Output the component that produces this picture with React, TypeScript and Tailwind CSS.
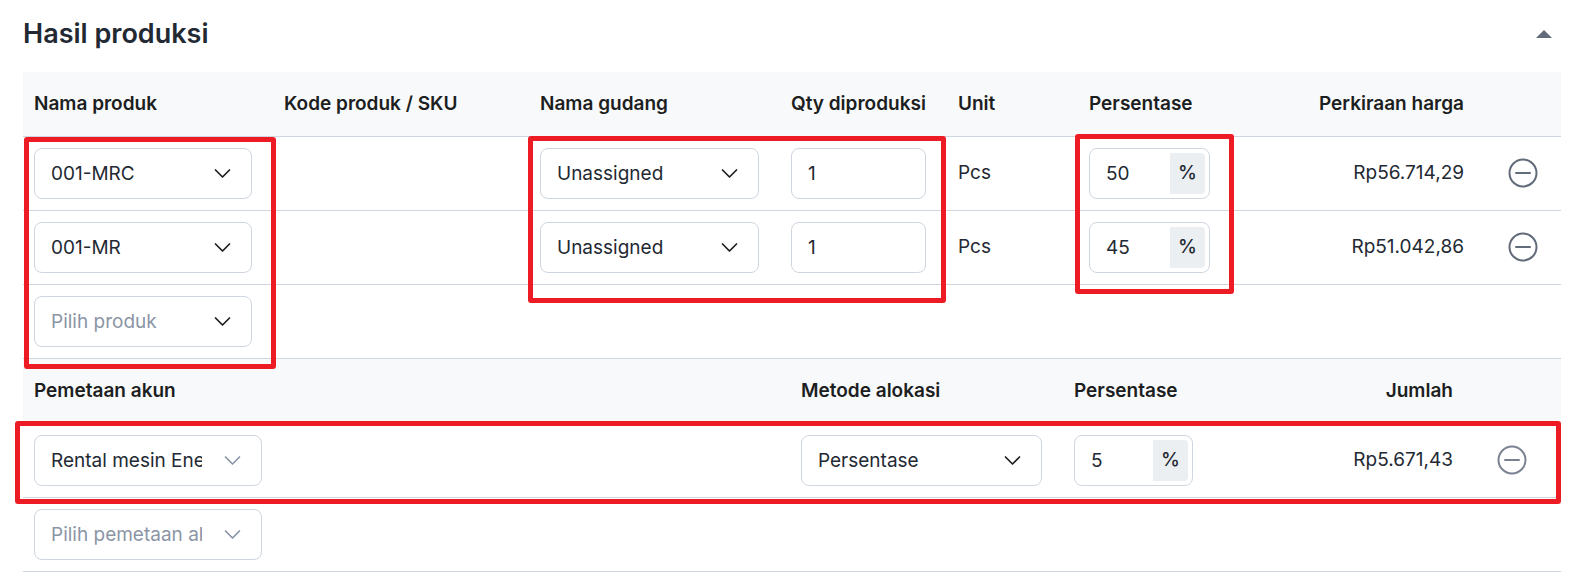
import React, { useState } from 'react';

interface Product {
  id: number;
  name: string;
  warehouse: string;
  qty: string;
  unit: string;
  percent: string;
  price: string;
}

const products: Product[] = [
  { id: 1, name: '001-MRC', warehouse: 'Unassigned', qty: '1', unit: 'Pcs', percent: '50', price: 'Rp56.714,29' },
  { id: 2, name: '001-MR', warehouse: 'Unassigned', qty: '1', unit: 'Pcs', percent: '45', price: 'Rp51.042,86' },
];

const fieldClass = 'h-[51px] w-full rounded-lg border border-[#cfd6df] bg-white text-[19px]';

interface SelectFieldProps {
  label: string;
  value?: string;
  placeholder?: string;
  options: string[];
  muted?: boolean;
}

const SelectField: React.FC<SelectFieldProps> = ({ label, value = '', placeholder, options, muted }) => (
  <div className="relative">
    <select
      aria-label={label}
      defaultValue={value}
      className={`${fieldClass} appearance-none pl-4 pr-[59px] ${value ? 'text-[#232933]' : 'text-[#8b95a5]'}`}
    >
      {placeholder && <option value="">{placeholder}</option>}
      {options.map((option) => (
        <option key={option} value={option}>{option}</option>
      ))}
    </select>
    <svg
      className={`pointer-events-none absolute right-5 top-[17px] h-4 w-[18px] ${muted ? 'text-[#8b95a5]' : 'text-[#1c1e21]'}`}
      viewBox="0 0 18 16"
      fill="none"
      stroke="currentColor"
      strokeWidth={1.7}
      strokeLinecap="round"
      strokeLinejoin="round"
    >
      <path d="M1.5 5l7 7 7-7" />
    </svg>
  </div>
);

const PercentField: React.FC<{ value: string }> = ({ value }) => (
  <div className="flex h-[51px] rounded-lg border border-[#cfd6df] bg-white p-1">
    <input
      aria-label="Persentase"
      defaultValue={value}
      className="min-w-0 flex-1 pl-3 text-[19px] text-[#232933] outline-none"
    />
    <span className="flex w-[35px] items-center justify-center rounded-r bg-[#eceff2] pb-0.5 text-[19px] font-medium text-[#232933]">%</span>
  </div>
);

const RemoveButton: React.FC<{ muted?: boolean }> = ({ muted }) => (
  <button type="button" aria-label="Hapus baris" className={`block ${muted ? 'text-[#7a8291]' : 'text-[#626b79]'}`}>
    <svg className="size-[30px]" viewBox="0 0 30 30" fill="none" stroke="currentColor" strokeWidth={2} strokeLinecap="round">
      <circle cx="15" cy="15" r="13.5" />
      <path d="M8 15h14" />
    </svg>
  </button>
);

// Red marker frame drawn on top of the form
const Highlight: React.FC<{ className: string }> = ({ className }) => (
  <div className={`pointer-events-none absolute rounded-[3px] border-[5px] border-[#ed1c24] ${className}`} />
);

const tableClass =
  'w-full table-fixed border-separate border-spacing-0 [&_td]:border-b [&_td]:border-[#cfd6df] [&_th]:border-b [&_th]:border-[#cfd6df]';
const headCell = 'py-0 pl-[11px] text-left font-semibold text-[#1c1e21]';
const headCellRight = 'pr-[21px] text-right font-semibold text-[#1c1e21]';
const fieldCell = 'py-[11px] pl-[11px] pr-[21px]';

export default function App() {
  const [open, setOpen] = useState(true);

  return (
    <main className="bg-white pl-[23px] pr-[26px] font-['Inter',sans-serif] text-[19px] leading-7 text-[#232933]">
      <header className="flex h-[72px] items-center justify-between pb-1 pr-[9px]">
        <h2 className="text-[27px] font-semibold">Hasil produksi</h2>
        <button type="button" aria-label="Tutup bagian" aria-expanded={open} onClick={() => setOpen(!open)}>
          <svg className="h-2 w-4 text-[#626b79]" viewBox="0 0 16 8" fill="currentColor">
            <path d="M8 0l8 8H0z" />
          </svg>
        </button>
      </header>

      {open && (
        <div className="relative">
          <table className={tableClass}>
            <colgroup>
              <col className="w-[250px]" />
              <col />
              <col className="w-[251px]" />
              <col className="w-[167px]" />
              <col className="w-[131px]" />
              <col className="w-[153px]" />
              <col className="w-[254px]" />
              <col className="w-[76px]" />
            </colgroup>
            <thead>
              <tr className="h-[65px] bg-[#f8f9fb]">
                <th className={headCell}>Nama produk</th>
                <th className={headCell}>Kode produk / SKU</th>
                <th className={headCell}>Nama gudang</th>
                <th className={`${headCell} whitespace-nowrap`}>Qty diproduksi</th>
                <th className={headCell}>Unit</th>
                <th className={headCell}>Persentase</th>
                <th className={headCellRight}>Perkiraan harga</th>
                <th />
              </tr>
            </thead>
            <tbody>
              {products.map((product) => (
                <tr key={product.id}>
                  <td className={fieldCell}>
                    <SelectField label="Nama produk" value={product.name} options={['001-MRC', '001-MR']} />
                  </td>
                  <td />
                  <td className={fieldCell}>
                    <SelectField label="Nama gudang" value={product.warehouse} options={['Unassigned']} />
                  </td>
                  <td className={fieldCell}>
                    <input aria-label="Qty diproduksi" defaultValue={product.qty} className={`${fieldClass} px-4 text-[#232933]`} />
                  </td>
                  <td className="pb-0.5 pl-[11px]">{product.unit}</td>
                  <td className={fieldCell}>
                    <PercentField value={product.percent} />
                  </td>
                  <td className="pb-0.5 pr-[21px] text-right">{product.price}</td>
                  <td className="pb-0.5 pl-[23px]">
                    <RemoveButton />
                  </td>
                </tr>
              ))}
              <tr>
                <td className={fieldCell}>
                  <SelectField label="Nama produk" placeholder="Pilih produk" options={['001-MRC', '001-MR']} />
                </td>
                <td colSpan={7} />
              </tr>
            </tbody>
          </table>

          <table className={tableClass}>
            <colgroup>
              <col />
              <col className="w-[273px]" />
              <col className="w-[151px]" />
              <col className="w-[260px]" />
              <col className="w-[87px]" />
            </colgroup>
            <thead>
              <tr className="h-[65px] bg-[#f8f9fb]">
                <th className={headCell}>Pemetaan akun</th>
                <th className={headCell}>Metode alokasi</th>
                <th className={headCell}>Persentase</th>
                <th className={headCellRight}>Jumlah</th>
                <th />
              </tr>
            </thead>
            <tbody>
              <tr>
                <td className={fieldCell}>
                  <div className="w-[228px]">
                    <SelectField label="Pemetaan akun" value="Rental mesin Energi" options={['Rental mesin Energi']} muted />
                  </div>
                </td>
                <td className={fieldCell}>
                  <SelectField label="Metode alokasi" value="Persentase" options={['Persentase']} />
                </td>
                <td className={fieldCell}>
                  <PercentField value="5" />
                </td>
                <td className="pb-0.5 pr-[21px] text-right">Rp5.671,43</td>
                <td className="pb-0.5 pl-[23px]">
                  <RemoveButton muted />
                </td>
              </tr>
              <tr>
                <td className={fieldCell}>
                  <div className="w-[228px]">
                    <SelectField label="Pemetaan akun" placeholder="Pilih pemetaan akun" options={['Rental mesin Energi']} muted />
                  </div>
                </td>
                <td colSpan={4} />
              </tr>
            </tbody>
          </table>

          <Highlight className="left-px top-[65px] h-[232px] w-[252px]" />
          <Highlight className="right-[615px] top-16 h-[167px] w-[418px]" />
          <Highlight className="right-[327px] top-[62px] h-[160px] w-[159px]" />
          <Highlight className="-left-2 right-0 top-[349px] h-[83px]" />
        </div>
      )}
    </main>
  );
}
